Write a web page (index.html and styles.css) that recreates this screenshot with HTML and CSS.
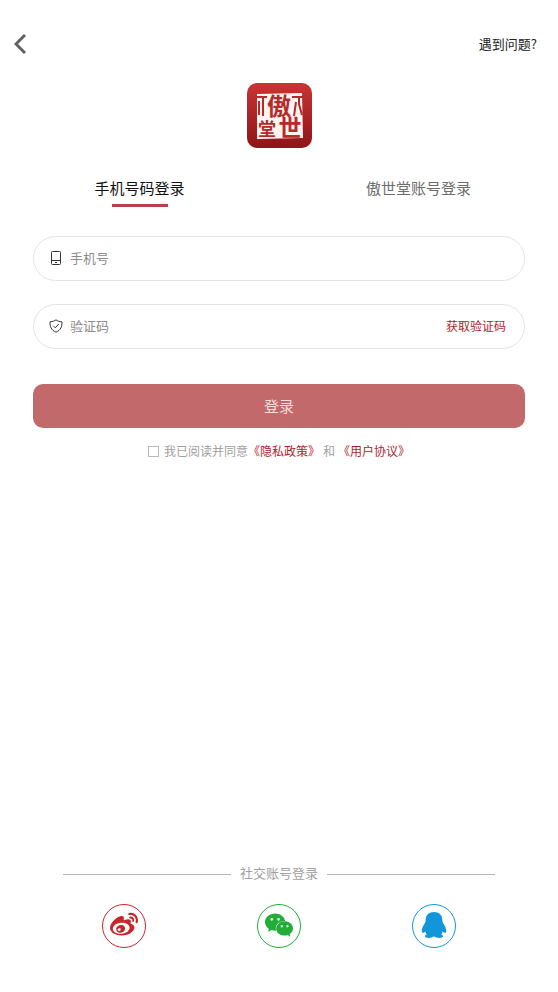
FILE: index.html
```html
<!DOCTYPE html>
<html lang="zh-CN">
<head>
<meta charset="utf-8">
<meta name="viewport" content="width=device-width, initial-scale=1">
<title>登录</title>
<link rel="stylesheet" href="styles.css">
</head>
<body>
<header class="topbar">
  <button class="back" type="button" aria-label="返回">
    <svg width="12" height="20" viewBox="0 0 12 20" fill="none" stroke="#626262" stroke-width="3"><path d="M11 1 2 10l9 9"/></svg>
  </button>
  <a class="help" href="#">遇到问题?</a>
</header>
<main class="content">
  <svg class="logo" viewBox="0 0 65 65" role="img" aria-label="傲世堂">
    <defs>
      <linearGradient id="seal" x1="0" y1="0" x2="0" y2="1"><stop offset="0" stop-color="#c93434"/><stop offset="1" stop-color="#8e1517"/></linearGradient>
    </defs>
    <rect width="65" height="65" rx="10" fill="url(#seal)"/>
    <path d="M10 11 55 10l1 45-46 1Z" fill="#fff4ef"/>
    <path d="M10 14h10M16 14v19M12 18v14M45 14h11M52 14v7l3 11M49 19l-2 14" fill="none" stroke="#b52b2a" stroke-width="2"/>
    <g class="logo-text">
      <text x="32" y="32" font-size="24" text-anchor="middle">傲</text>
      <text x="43" y="53" font-size="23" text-anchor="middle">世</text>
      <text x="20" y="53" font-size="18" text-anchor="middle">堂</text>
    </g>
  </svg>
  <nav class="tabs">
    <button class="tab active" type="button">手机号码登录</button>
    <button class="tab" type="button">傲世堂账号登录</button>
  </nav>
  <form class="form">
    <div class="field">
      <label for="phone" aria-label="手机号">
        <svg width="14" height="14" viewBox="0 0 14 14" fill="none" stroke="#333"><rect x="2.500" y=".5" width="9" height="13" rx="1"/><path d="M2.500 9.500h9M6 11.500h2"/></svg>
      </label>
      <input id="phone" type="tel" placeholder="手机号">
    </div>
    <div class="field">
      <label for="code" aria-label="验证码">
        <svg width="14" height="14" viewBox="0 0 14 14" fill="none" stroke="#333"><path d="M7 .8C5.500 2 3.500 2.700 1 2.800c0 5 1 8 6 10.400 5-2.400 6-5.400 6-10.400C10.500 2.700 8.500 2 7 .8ZM4.300 6.800l2 2 3.500-3.700"/></svg>
      </label>
      <input id="code" type="text" placeholder="验证码">
      <button class="send" type="button">获取验证码</button>
    </div>
    <button class="submit" type="submit">登录</button>
    <div class="agree">
      <input id="agree" type="checkbox">
      <label for="agree">我已阅读并同意</label><a href="#">《隐私政策》</a><span class="and">和</span><a href="#">《用户协议》</a>
    </div>
  </form>
</main>
<footer class="social">
  <h2 class="divider">社交账号登录</h2>
  <div class="providers">
    <button class="provider weibo" type="button" aria-label="微博">
      <svg width="28" height="28" viewBox="0 0 512 512" fill="currentColor"><path d="M407 177.600c7.600-24-13.400-46.800-37.400-41.700-22 4.800-28.800-28.100-7.100-32.800 50.100-10.900 92.300 37.100 76.500 84.800-6.800 21.200-38.800 10.800-32-10.300zM214.800 446.700C108.500 446.700 0 395.300 0 310.400c0-44.300 28-95.400 76.300-143.700C176 67 279.500 65.800 249.900 161c-4 13.100 12.300 5.700 12.300 6 79.500-33.600 140.500-16.800 114 51.400-3.700 9.400 1.100 10.900 8.300 13.100 135.700 42.300 34.800 215.200-169.700 215.200zm143.700-146.300c-5.400-55.700-78.500-94-163.400-85.700-84.800 8.600-148.800 60.300-143.400 116s78.500 94 163.400 85.700c84.800-8.600 148.800-60.300 143.400-116zM347.900 35.100c-25.900 5.600-16.800 43.700 8.300 38.300 72.300-15.200 134.800 52.800 111.700 124-7.400 24.200 29.100 37 37.400 12 31.900-99.800-55.100-195.900-157.400-174.300zm-78.500 311c-17.100 38.800-66.800 60-109.100 46.300-40.800-13.100-58-53.400-40.300-89.700 17.700-35.400 63.100-55.400 103.400-45.100 42 10.800 63.100 50.200 46 88.500zm-86.300-30c-12.900-5.400-30 .3-38 12.900-8.300 12.900-4.300 28 8.600 34 13.100 6 30.800.3 39.100-12.900 8-13.100 3.700-28.300-9.700-34z"/></svg>
    </button>
    <button class="provider wechat" type="button" aria-label="微信">
      <svg width="28" height="28" viewBox="0 0 24 24" fill="currentColor"><path d="M8.691 2.188C3.891 2.188 0 5.476 0 9.530c0 2.212 1.170 4.203 3.002 5.550a.59.59 0 0 1 .213.665l-.39 1.480c-.019.07-.048.141-.048.213 0 .163.13.295.29.295a.326.326 0 0 0 .167-.054l1.903-1.114a.864.864 0 0 1 .717-.098 10.160 10.160 0 0 0 2.837.403c.276 0 .543-.027.811-.05-.857-2.578.157-4.972 1.932-6.446 1.703-1.415 3.882-1.980 5.853-1.838-.576-3.583-4.196-6.348-8.596-6.348zM5.785 5.991c.642 0 1.162.529 1.162 1.180a1.170 1.170 0 0 1-1.162 1.178A1.170 1.170 0 0 1 4.623 7.170c0-.651.52-1.180 1.162-1.180zm5.813 0c.642 0 1.162.529 1.162 1.180a1.170 1.170 0 0 1-1.162 1.178 1.170 1.170 0 0 1-1.162-1.178c0-.651.52-1.180 1.162-1.180zm5.340 2.867c-1.797-.052-3.746.512-5.280 1.786-1.720 1.428-2.687 3.720-1.780 6.220.942 2.453 3.666 4.229 6.884 4.229.826 0 1.622-.12 2.361-.336a.722.722 0 0 1 .598.082l1.584.926a.272.272 0 0 0 .14.047c.134 0 .24-.111.24-.247 0-.06-.023-.12-.038-.177l-.327-1.233a.582.582 0 0 1-.023-.156.49.49 0 0 1 .201-.398C23.024 18.480 24 16.820 24 14.980c0-3.210-2.931-5.837-6.656-6.088V8.890c-.135-.01-.27-.027-.407-.03zm-2.530 3.274c.535 0 .969.44.969.982a.976.976 0 0 1-.969.983.976.976 0 0 1-.969-.983c0-.542.434-.982.97-.982zm4.844 0c.535 0 .969.44.969.982a.976.976 0 0 1-.969.983.976.976 0 0 1-.969-.983c0-.542.434-.982.969-.982z"/></svg>
    </button>
    <button class="provider qq" type="button" aria-label="QQ">
      <svg width="28" height="28" viewBox="0 0 28 28" fill="currentColor"><path d="M14 1C9 1 5.800 4 5.700 8.500c0 1.500-.3 2.800-1.200 4.300C2.700 15.800 1.500 18 1.800 20.700c.3 1.800 1.900 1.300 3.600-.3.300 1.300.7 2.200 1.300 3-1.200.5-2 1.300-1.800 2.200.4 1.700 7.100 1.700 8.600 0h1c1.500 1.700 8.200 1.700 8.600 0 .2-.9-.6-1.700-1.800-2.200.6-.8 1-1.700 1.300-3 1.700 1.600 3.300 2.100 3.600.3.300-2.700-.9-4.900-2.700-7.900-.9-1.500-1.200-2.800-1.200-4.300C22.200 4 19 1 14 1Z"/></svg>
    </button>
  </div>
</footer>
</body>
</html>
```
FILE: styles.css
```css
* { box-sizing: border-box; }
body {
  margin: 0;
  min-height: 100vh;
  display: flex;
  flex-direction: column;
  background: #fff;
  color: #222;
  font: 13px/20px "Noto Sans CJK SC", sans-serif;
}
button, input { font: inherit; color: inherit; }
button { padding: 0; border: 0; background: none; cursor: pointer; }
a { color: inherit; text-decoration: none; }
svg { display: block; }
.topbar {
  display: flex;
  align-items: center;
  justify-content: space-between;
  padding: 34px 21px 0 14px;
}
.content { flex: 1; }
.logo { width: 65px; margin: 29px auto 0; }
.logo-text { fill: #b52b2a; font-weight: 700; }
.tabs { display: grid; grid-template-columns: 1fr 1fr; margin-top: 30px; }
.tab {
  display: flex;
  flex-direction: column;
  align-items: center;
  gap: 6px;
  font-size: 15px;
  line-height: 20px;
  color: #6c6c6c;
}
.tab::after { content: ""; width: 56px; height: 3px; }
.tab.active { color: #111; }
.tab.active::after { background: #b63f48; }
.form { padding: 0 33px; margin-top: 29px; }
.field {
  display: flex;
  align-items: center;
  gap: 7px;
  height: 45px;
  margin-bottom: 23px;
  padding: 0 18px 2px 15px;
  border: 1px solid #e4e4e4;
  border-radius: 23px;
}
.field input {
  flex: 1;
  min-width: 0;
  padding: 0;
  border: 0;
  outline: 0;
  background: none;
}
.field input::placeholder { color: #8c8c8c; opacity: 1; }
.send { color: #ae1e2c; font-size: 12px; }
.submit {
  display: block;
  width: 100%;
  height: 44px;
  margin-top: 35px;
  padding-bottom: 1px;
  border-radius: 10px;
  background: #c1696b;
  color: #f6dedd;
  font-size: 15px;
}
.agree {
  display: flex;
  align-items: center;
  justify-content: center;
  margin-top: 13px;
  font-size: 12px;
  color: #a0a0a0;
}
.agree input {
  appearance: none;
  width: 11px;
  height: 11px;
  margin: 0 5px 0 0;
  border: 1px solid #b8b8b8;
}
.agree a { color: #ae1e2c; }
.and { margin: 0 3px; }
.social { padding-bottom: 44px; }
.divider {
  display: flex;
  align-items: center;
  gap: 9px;
  margin: 0 63px 21px;
  font-size: 13px;
  font-weight: 400;
  color: #a0a0a0;
}
.divider::before, .divider::after {
  content: "";
  flex: 1;
  height: 1px;
  margin-top: 3px;
  background: #b8b8b8;
}
.providers {
  display: grid;
  grid-template-columns: repeat(3, 1fr);
  justify-items: center;
  padding: 0 46px;
}
.provider {
  display: grid;
  place-items: center;
  width: 44px;
  height: 44px;
  padding-bottom: 3px;
  border: 1px solid currentColor;
  border-radius: 50%;
}
.weibo { color: #c9252b; }
.wechat { color: #22ac38; }
.qq { color: #1296db; }
```
